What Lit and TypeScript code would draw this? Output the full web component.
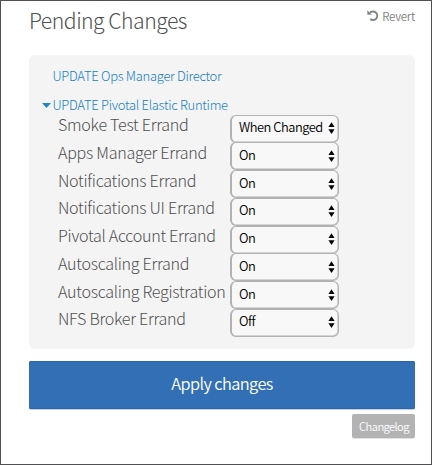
import { LitElement, html, css } from "lit";
import { customElement, property } from "lit/decorators.js";

@customElement("errand-row")
class ErrandRow extends LitElement {
  @property() label = "";
  @property() value = "";

  static styles = css`
    :host { display: flex; height: 27.75px; }
    .label {
      width: 172px;
      flex: none;
      margin-top: -0.6px;
      font-size: 16.1px;
      letter-spacing: -0.29px;
      line-height: 20px;
      font-weight: 300;
      color: #505050;
      white-space: nowrap;
    }
    .select {
      box-sizing: border-box;
      width: 109px;
      height: 28px;
      display: flex;
      align-items: center;
      justify-content: space-between;
      padding: 0 3px 1px 7px;
      border: 1px solid #b2b2b2;
      border-left-width: 2px;
      box-shadow: inset -0.5px -0.5px 0 #b2b2b2;
      border-radius: 6px;
      background: #f8f8f8;
      color: #000;
      font-size: 12.9px;
      letter-spacing: -0.5px;
      line-height: 20px;
      font-weight: 350;
      white-space: nowrap;
    }
    .value { position: relative; top: -1px; }
    svg { display: block; flex: none; }
  `;

  render() {
    return html`
      <span class="label">${this.label}</span>
      <div class="select">
        <span class="value">${this.value}</span>
        <svg width="7" height="12" viewBox="0 0 7 12" fill="#050505">
          <path d="M3.5 0.3 6.6 5H.4zM.4 7.2h6.2L3.5 12z" />
        </svg>
      </div>
    `;
  }
}

@customElement("app-root")
class AppRoot extends LitElement {
  static styles = css`
    :host {
      display: block;
      box-sizing: border-box;
      width: 432px;
      height: 465px;
      padding: 8px 16px 0 28px;
      border: 1px solid #505052;
      background: #fff;
      font-family: "Noto Sans CJK SC", sans-serif;
      font-weight: 300;
      overflow: hidden;
    }
    .header { display: flex; justify-content: space-between; height: 46px; }
    .title {
      margin: -2px 0 0;
      font-size: 21.2px;
      letter-spacing: -0.5px;
      line-height: 26px;
      font-weight: 300;
      color: #505050;
    }
    .revert {
      display: flex;
      gap: 3px;
      height: 14px;
      font-size: 11.5px;
      letter-spacing: -0.25px;
      line-height: 14px;
      font-weight: 350;
      color: #808080;
    }
    .panel {
      box-sizing: border-box;
      height: 294px;
      padding: 12px 12px 0 13px;
      border-radius: 6px;
      background: #f4f4f4;
    }
    .link {
      display: flex;
      align-items: center;
      height: 18px;
      margin-bottom: 11px;
      font-size: 13px;
      letter-spacing: -0.3px;
      line-height: 18px;
      color: #1780c4;
      white-space: nowrap;
    }
    .marker { width: 10.5px; flex: none; }
    .marker svg { display: block; }
    .errands { margin-top: -11px; padding: 0.6px 0 0 16px; }
    .apply {
      height: 48px;
      margin-top: 12px;
      border-radius: 2px;
      background: #326fb5;
      box-shadow: 0 1px 0 #c3d2e4, inset 0 1px 0 #2a66ac, inset 0 -1px 0 #2a66ac;
      color: #fff;
      font-size: 16.4px;
      letter-spacing: -0.6px;
      line-height: 45px;
      font-weight: 350;
      text-align: center;
    }
    .footer { display: flex; justify-content: flex-end; margin-top: 5px; }
    .changelog {
      box-sizing: border-box;
      width: 63px;
      height: 24px;
      padding-left: 1px;
      border-radius: 2px;
      background: #b3b3b3;
      box-shadow: 0 1px 0 #e2e2e2;
      color: #fff;
      font-size: 11.2px;
      letter-spacing: -0.6px;
      line-height: 24px;
      font-weight: 350;
      text-align: center;
    }
  `;

  private errands = [
    ["Smoke Test Errand", "When Changed"],
    ["Apps Manager Errand", "On"],
    ["Notifications Errand", "On"],
    ["Notifications UI Errand", "On"],
    ["Pivotal Account Errand", "On"],
    ["Autoscaling Errand", "On"],
    ["Autoscaling Registration", "On"],
    ["NFS Broker Errand", "Off"],
  ];

  render() {
    return html`
      <div class="header">
        <h1 class="title">Pending Changes</h1>
        <div class="revert">
          <svg width="12" height="13" viewBox="0 0 12 13" fill="none">
            <path d="M2.7 4A4.3 4.3 0 1 1 3.2 10" stroke="#858585" stroke-width="1.9" />
            <path d="M.3 1.3v4.5h4.6z" fill="#858585" />
          </svg>
          <span>Revert</span>
        </div>
      </div>
      <div class="panel">
        <div class="link"><span class="marker"></span><span>UPDATE Ops Manager Director</span></div>
        <div class="link">
          <span class="marker">
            <svg width="9" height="5" viewBox="0 0 9 5"><path d="M0 0h9L4.5 5z" fill="#1f86c8" /></svg>
          </span>
          <span>UPDATE Pivotal Elastic Runtime</span>
        </div>
        <div class="errands">
          ${this.errands.map(([l, v]) => html`<errand-row .label=${l} .value=${v}></errand-row>`)}
        </div>
      </div>
      <div class="apply">Apply changes</div>
      <div class="footer"><div class="changelog">Changelog</div></div>
    `;
  }
}
